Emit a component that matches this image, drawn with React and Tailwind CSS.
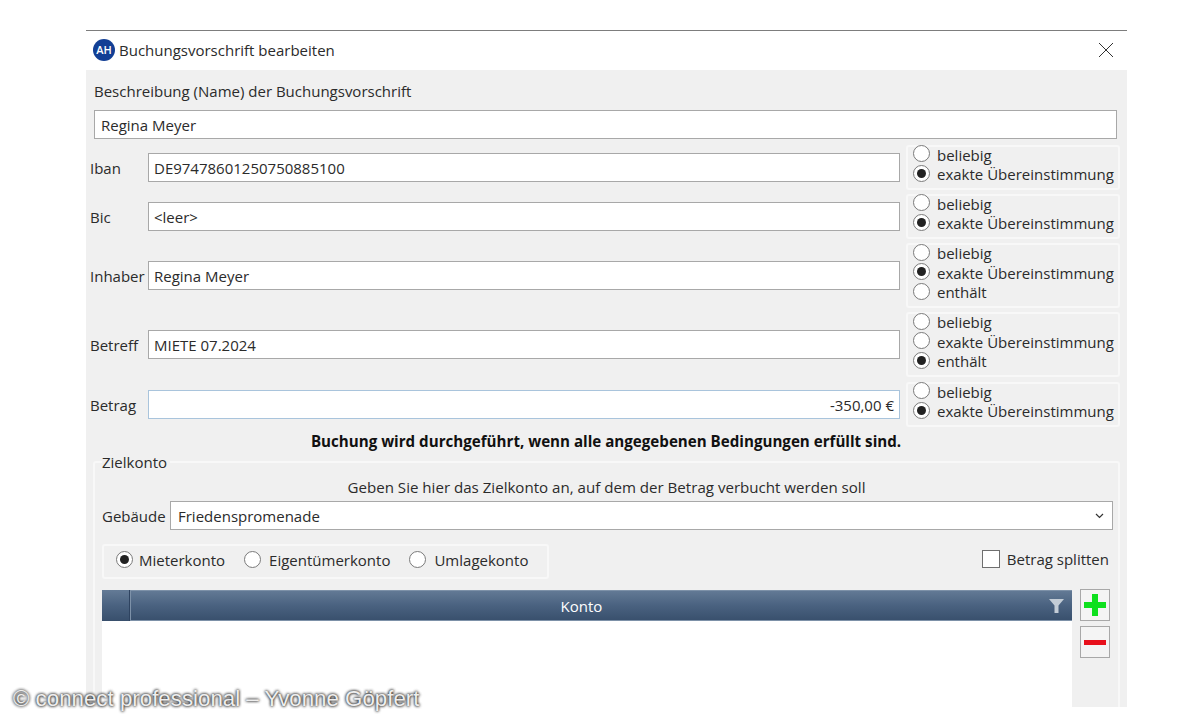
const FONT = { fontFamily: '"Open Sans", "Noto Sans", sans-serif' };

function Radio({ checked, className = '' }) {
  return (
    <span className={`flex h-[17px] w-[17px] shrink-0 items-center justify-center rounded-full border border-[#7a7a7a] bg-white ${className}`}>
      {checked && <span className="h-[9px] w-[9px] rounded-full bg-[#222]"></span>}
    </span>
  );
}

function RadioGroup({ options, selected, className }) {
  return (
    <div className={`ml-[6px] flex w-[214px] shrink-0 flex-col justify-center rounded-[3px] border-2 border-[#f8f8f8] pb-[6px] pl-[5px] ${className}`}>
      {options.map((o) => (
        <div key={o} className="flex h-[19.5px] shrink-0 items-center gap-[7px]">
          <Radio checked={o === selected} className="-translate-y-px" />
          <span className="whitespace-nowrap">{o}</span>
        </div>
      ))}
    </div>
  );
}

const TWO = ['beliebig', 'exakte Übereinstimmung'];
const THREE = ['beliebig', 'exakte Übereinstimmung', 'enthält'];

function Row({ label, value, options, selected, height, right, blue, className }) {
  return (
    <div className={`flex items-center ${height} ${className}`}>
      <span className="ml-[4px] w-[58px] shrink-0 whitespace-nowrap">{label}</span>
      <div className={`flex h-[29px] w-[752px] shrink-0 items-center border bg-white px-[5px] ${blue ? 'border-[#a9c4dc]' : 'border-[#a8a8a8]'} ${right ? 'justify-end' : ''}`}>
        {value}
      </div>
      <RadioGroup options={options} selected={selected} className={height} />
    </div>
  );
}

export default function App() {
  return (
    <div className="h-[720px] w-[1200px] overflow-hidden bg-white pt-[30px] text-[15px] leading-[20px] text-[#2b2b2b]" style={FONT}>
      <div className="relative ml-[86px] w-[1041px] border-t border-[#7d7d7d]">
        {/* Title bar */}
        <div className="flex h-[39px] items-center pb-[2px] pl-[7px] pr-[13px]">
          <span className="flex h-[22px] w-[22px] items-center justify-center rounded-full bg-[#123f95] text-[11px] font-semibold text-white">AH</span>
          <span className="ml-[4px] flex-1">Buchungsvorschrift bearbeiten</span>
          <svg width="16" height="16" viewBox="0 0 16 16" stroke="#333" strokeWidth="1" fill="none">
            <path d="M1 1 L15 15 M15 1 L1 15" />
          </svg>
        </div>

        <div className="h-[637px] overflow-hidden bg-[#f0f0f0]">
          <div className="ml-[8px] pt-[11px]">Beschreibung (Name) der Buchungsvorschrift</div>
          <div className="ml-[8px] mt-[9px] flex h-[29px] w-[1023px] items-center border border-[#a8a8a8] bg-white px-[6px]">Regina Meyer</div>

          <Row className="mt-[6px]" height="h-[45px]" label="Iban" value="DE97478601250750885100" options={TWO} selected="exakte Übereinstimmung" />
          <Row className="mt-[4px]" height="h-[45px]" label="Bic" value="<leer>" options={TWO} selected="exakte Übereinstimmung" />
          <Row className="mt-[4px]" height="h-[65px]" label="Inhaber" value="Regina Meyer" options={THREE} selected="exakte Übereinstimmung" />
          <Row className="mt-[4px]" height="h-[65px]" label="Betreff" value="MIETE 07.2024" options={THREE} selected="enthält" />
          <Row className="mt-[5px]" height="h-[45px]" label="Betrag" value="-350,00 €" options={TWO} selected="exakte Übereinstimmung" right blue />

          <div className="mt-[4px] h-[22px] w-[1040px] text-center text-[15.15px] font-bold text-[#111]">Buchung wird durchgeführt, wenn alle angegebenen Bedingungen erfüllt sind.</div>

          {/* Zielkonto */}
          <div className="relative ml-[7px] mt-[8px] h-[264px] w-[1027px] rounded-[3px] border-2 border-[#f8f8f8] px-[7px] pt-[14px]">
            <span className="absolute left-[7px] top-[-11px] bg-[#f0f0f0] pr-[3px]">Zielkonto</span>
            <div className="text-center text-[15.1px]">Geben Sie hier das Zielkonto an, auf dem der Betrag verbucht werden soll</div>
            <div className="mt-[4px] flex items-center">
              <span className="w-[68px] shrink-0">Gebäude</span>
              <div className="flex h-[29px] w-[943px] shrink-0 items-center justify-between border border-[#a8a8a8] bg-white pl-[7px] pr-[8px]">
                Friedenspromenade
                <svg width="9" height="6" viewBox="0 0 9 6" fill="none" stroke="#333" strokeWidth="1.2"><path d="M1 1 L4.5 4.5 L8 1" /></svg>
              </div>
            </div>
            <div className="mt-[14px] flex items-center justify-between pr-[2px]">
              <div className="flex h-[35px] w-[447px] items-center rounded-[3px] border-2 border-[#f8f8f8] pb-[4px] pl-[12px]">
                <Radio checked />
                <span className="ml-[6px]">Mieterkonto</span>
                <Radio className="ml-[19px]" />
                <span className="ml-[8px]">Eigentümerkonto</span>
                <Radio className="ml-[19px]" />
                <span className="ml-[8px]">Umlagekonto</span>
              </div>
              <div className="flex items-center gap-[7px] pb-[5px]">
                <span className="h-[18px] w-[18px] border border-[#6f6f6f] bg-white"></span>
                Betrag splitten
              </div>
            </div>
            <div className="mt-[10px] flex">
              <div className="mt-[1px] w-[970px] shrink-0">
                <div className="flex h-[31px] bg-gradient-to-b from-[#647b96] via-[#4a6280] to-[#384f6c] text-white">
                  <div className="w-[28px] border-r border-[#2e4360]"></div>
                  <div className="relative flex flex-1 items-center justify-center border-b border-l border-t border-[#7d91a8] pr-[40px]">
                    Konto
                    <svg className="absolute right-[8px] top-[8px]" width="15" height="14" viewBox="0 0 15 14" fill="#c3ccd6">
                      <path d="M0 0 H15 L9.5 6.5 V14 H5.5 V6.5 Z" />
                    </svg>
                  </div>
                </div>
                <div className="h-[120px] bg-white"></div>
              </div>
              <div className="ml-[8px] flex flex-col gap-[5px]">
                <div className="flex h-[32px] w-[30px] items-center justify-center border border-[#a8a8a8] bg-[#f4f4f4]">
                  <svg width="22" height="22" viewBox="0 0 22 22" fill="#0ee01e"><path d="M8 0 H14 V8 H22 V14 H14 V22 H8 V14 H0 V8 H8 Z" /></svg>
                </div>
                <div className="flex h-[32px] w-[30px] items-center justify-center border border-[#a8a8a8] bg-[#f4f4f4]">
                  <span className="h-[5px] w-[22px] bg-[#e8101c]"></span>
                </div>
              </div>
            </div>
          </div>
        </div>
      </div>

      {/* Watermark */}
      <div className="absolute left-[13px] top-[686px] text-[22.3px] leading-[26px] text-[#eeeeee] [font-family:'Liberation_Sans',sans-serif] [text-shadow:0_0_3px_#222,0_0_3px_#222]">© connect professional – Yvonne Göpfert</div>
    </div>
  );
}
